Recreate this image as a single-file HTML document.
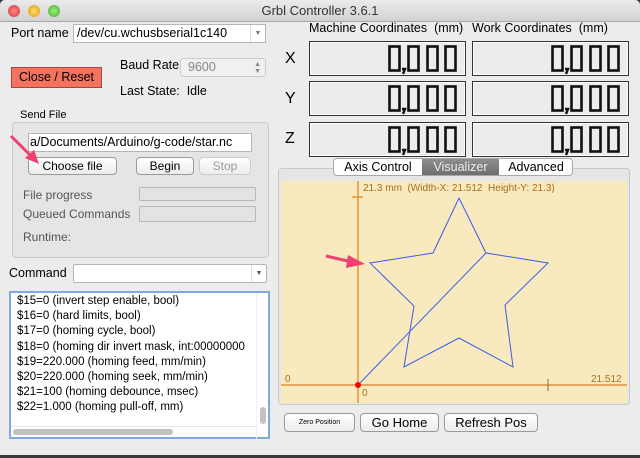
<!DOCTYPE html>
<html><head><meta charset="utf-8"><style>
*{box-sizing:border-box;margin:0;padding:0}
body{width:640px;height:458px;overflow:hidden;background:#3a3a3a;font-family:"Liberation Sans",sans-serif;font-size:12px;color:#000;position:relative}
.win{position:absolute;left:0;top:0;width:640px;height:455px;background:#ececec;border-radius:5px 5px 0 0;overflow:hidden}
.title{position:absolute;left:0;top:0;width:640px;height:22px;background:linear-gradient(#ebebeb,#d2d2d2);border-bottom:1px solid #a8a8a8;text-align:center;font-size:13px;line-height:22px;color:#333}
.dot{position:absolute;top:5px;width:12px;height:12px;border-radius:50%}
.a{position:absolute;white-space:nowrap}
.field{position:absolute;background:#fff;border:1px solid #b5b5b5}
.btn{position:absolute;background:linear-gradient(#fff,#ececec);border:1px solid #9a9a9a;border-radius:4px;text-align:center;font-size:12px}
.box{position:absolute;border:1px solid #333;background:#ececec;box-shadow:inset 0 0 0 1px #fff}
.bar{position:absolute;background:#e3e3e3;border:1px solid #b8b8b8;border-radius:2px}
.lines div{height:15.2px;line-height:15.2px;font-size:11.5px}
</style></head><body>
<div class="win">
<div class="title">Grbl Controller 3.6.1
<div class="dot" style="left:8px;background:radial-gradient(#f88,#d33)"></div>
<div class="dot" style="left:28px;background:radial-gradient(#fd7,#d90)"></div>
<div class="dot" style="left:48px;background:radial-gradient(#9e7,#4a3)"></div>
</div>
<div class="a" style="left:11px;top:26px;font-size:12.5px">Port name</div>
<div class="field" style="left:73px;top:24px;width:193px;height:19px;font-size:12.5px;padding-left:3px;line-height:17px">/dev/cu.wchusbserial1c140<span style="position:absolute;right:0;top:0;width:15px;height:17px;border-left:1px solid #ddd;font-size:7px;color:#777;text-align:center">▼</span></div>
<div class="a" style="left:11px;top:67px;width:91px;height:21px;background:#f4735e;border:1px solid #a44;font-size:12.5px;text-align:center;line-height:19px">Close / Reset</div>
<div class="a" style="left:120px;top:58px;font-size:12.5px">Baud Rate</div>
<div class="field" style="left:180px;top:58px;width:86px;height:19px;background:#f0f0f0;border-color:#ccc;color:#888;font-size:12.5px;padding-left:7px;line-height:17px;border-radius:3px">9600<span style="position:absolute;right:4px;top:2px;font-size:7px;line-height:7px">▲<br>▼</span></div>
<div class="a" style="left:120px;top:84px;font-size:12.5px">Last State:&nbsp; Idle</div>
<div class="a" style="left:20px;top:109px;font-size:11px">Send File</div>
<div class="a" style="left:12px;top:122px;width:257px;height:136px;border:1px solid #c9c9c9;background:#e5e5e5;border-radius:4px"></div>
<div class="field" style="left:28px;top:133px;width:224px;height:19px;font-size:12.5px;line-height:17px;padding-left:1px;overflow:hidden">a/Documents/Arduino/g-code/star.nc</div>
<div class="btn" style="left:28px;top:157px;width:89px;height:18px;line-height:16px">Choose file</div>
<div class="btn" style="left:136px;top:157px;width:58px;height:18px;line-height:16px">Begin</div>
<div class="btn" style="left:199px;top:157px;width:52px;height:18px;line-height:16px;color:#999;border-color:#ccc">Stop</div>
<div class="a" style="left:23px;top:188px;color:#555">File progress</div>
<div class="bar" style="left:139px;top:187px;width:117px;height:14px"></div>
<div class="a" style="left:23px;top:207px;color:#555">Queued Commands</div>
<div class="bar" style="left:139px;top:206px;width:117px;height:16px"></div>
<div class="a" style="left:23px;top:230px;color:#555">Runtime:</div>
<svg class="a" style="left:5px;top:128px" width="40" height="40"><path d="M6 8 L28 30" stroke="#f04070" stroke-width="3"/><path d="M34 36 L20 30 L29 22 Z" fill="#f04070"/></svg>
<div class="a" style="left:9px;top:266px;font-size:12.5px">Command</div>
<div class="field" style="left:73px;top:264px;width:194px;height:19px;border-radius:2px"><span style="position:absolute;right:0;top:0;width:15px;height:17px;border-left:1px solid #ddd;font-size:7px;color:#555;text-align:center;line-height:17px">▼</span></div>
<div class="field" style="left:9px;top:291px;width:261px;height:148px;border:2px solid #7fa9e0;padding:0 0 0 6px">
<div class="lines" style="margin-top:1px">
<div>$15=0 (invert step enable, bool)</div><div>$16=0 (hard limits, bool)</div><div>$17=0 (homing cycle, bool)</div><div>$18=0 (homing dir invert mask, int:00000000</div><div>$19=220.000 (homing feed, mm/min)</div><div>$20=220.000 (homing seek, mm/min)</div><div>$21=100 (homing debounce, msec)</div><div>$22=1.000 (homing pull-off, mm)</div>
</div>
<div style="position:absolute;left:0;bottom:0;width:246px;height:11px;border-top:1px solid #e5e5e5"><div style="position:absolute;left:2px;top:2px;width:160px;height:6px;border-radius:3px;background:#c2c2c2"></div></div>
<div style="position:absolute;right:0;top:0;width:12px;height:146px;border-left:1px solid #f0f0f0"><div style="position:absolute;left:3px;top:114px;width:6px;height:17px;border-radius:3px;background:#c2c2c2"></div></div>
</div>
<div class="a" style="left:309px;top:21px;font-size:12.5px">Machine Coordinates&nbsp; (mm)</div>
<div class="a" style="left:472px;top:21px;font-size:12.5px">Work Coordinates&nbsp; (mm)</div>
<div class="a" style="left:285px;top:50px;font-size:16px">X</div>
<div class="a" style="left:285px;top:90px;font-size:16px">Y</div>
<div class="a" style="left:285px;top:130px;font-size:16px">Z</div>
<svg class="a" style="left:0;top:0" width="640" height="160">
<defs><g id="n"><g fill="none" stroke="#111" stroke-width="2.6"><rect x="1.5" y="1.5" width="10" height="24"/><rect x="20.5" y="1.5" width="10" height="24"/><rect x="39.5" y="1.5" width="10" height="24"/><rect x="57.5" y="1.5" width="10" height="24"/></g><path d="M14 24 L17 24 L15 29" stroke="#111" stroke-width="2.4" fill="none"/></g></defs>
</svg>
<div class="box" style="left:309px;top:41px;width:157px;height:35px"></div>
<div class="box" style="left:472px;top:41px;width:157px;height:35px"></div>
<div class="box" style="left:309px;top:81px;width:157px;height:35px"></div>
<div class="box" style="left:472px;top:81px;width:157px;height:35px"></div>
<div class="box" style="left:309px;top:122px;width:157px;height:35px"></div>
<div class="box" style="left:472px;top:122px;width:157px;height:35px"></div>
<svg class="a" style="left:0;top:0" width="640" height="160">
<use href="#n" x="388" y="45"/><use href="#n" x="551" y="45"/>
<use href="#n" x="388" y="85"/><use href="#n" x="551" y="85"/>
<use href="#n" x="388" y="126"/><use href="#n" x="551" y="126"/>
</svg>
<div class="a" style="left:278px;top:168px;width:352px;height:237px;border:1px solid #c9c9c9;border-radius:4px;background:#e6e6e6"></div>
<div class="a" style="left:281px;top:181px;width:346px;height:222px;background:#f8e9bf"></div>
<div class="a" style="left:333px;top:158px;width:240px;height:18px;border:1px solid #a8a8a8;border-radius:4px;background:#fff;font-size:12.5px;line-height:16px">
<span class="a" style="left:0;width:88px;text-align:center">Axis Control</span>
<span class="a" style="left:88px;width:77px;text-align:center;background:linear-gradient(#8e8e8e,#6e6e6e);color:#eee;height:16px">Visualizer</span>
<span class="a" style="left:165px;width:74px;text-align:center">Advanced</span>
</div>
<svg class="a" style="left:0;top:0" width="640" height="458">
<line x1="358" y1="181" x2="358" y2="403" stroke="#e0943c" stroke-width="1.5"/>
<line x1="281" y1="385" x2="627" y2="385" stroke="#e0943c" stroke-width="1.5"/>
<line x1="352" y1="197" x2="363" y2="197" stroke="#e0943c" stroke-width="1.5"/>
<line x1="548" y1="379" x2="548" y2="391" stroke="#8a6a3a" stroke-width="1"/>
<polyline fill="none" stroke="#3c5ee8" stroke-width="1" points="459,198 433,253 370,263 414,306 404,367 459,338 513,367 505,305 548,263 486,253 459,198"/>
<line x1="358" y1="385" x2="486" y2="253" stroke="#3c5ee8" stroke-width="1"/>
<circle cx="358" cy="385" r="3" fill="#f00"/>
<path d="M326 256 L352 262" stroke="#f04070" stroke-width="3"/><path d="M365 264 L348 255 L346 268 Z" fill="#f04070"/>
</svg>
<div class="a" style="left:363px;top:183px;font-size:10px;color:#a5701e">21.3 mm&nbsp; (Width-X: 21.512&nbsp; Height-Y: 21.3)</div>
<div class="a" style="left:285px;top:374px;font-size:10px;color:#a5701e">0</div>
<div class="a" style="left:591px;top:374px;font-size:10px;color:#a5701e">21.512</div>
<div class="a" style="left:362px;top:388px;font-size:10px;color:#a5701e">0</div>
<div class="btn" style="left:284px;top:413px;width:71px;height:19px;font-size:7px;line-height:17px">Zero Position</div>
<div class="btn" style="left:360px;top:413px;width:79px;height:19px;font-size:13px;line-height:17px">Go Home</div>
<div class="btn" style="left:444px;top:413px;width:94px;height:19px;font-size:13px;line-height:17px">Refresh Pos</div>
</div>
</body></html>
